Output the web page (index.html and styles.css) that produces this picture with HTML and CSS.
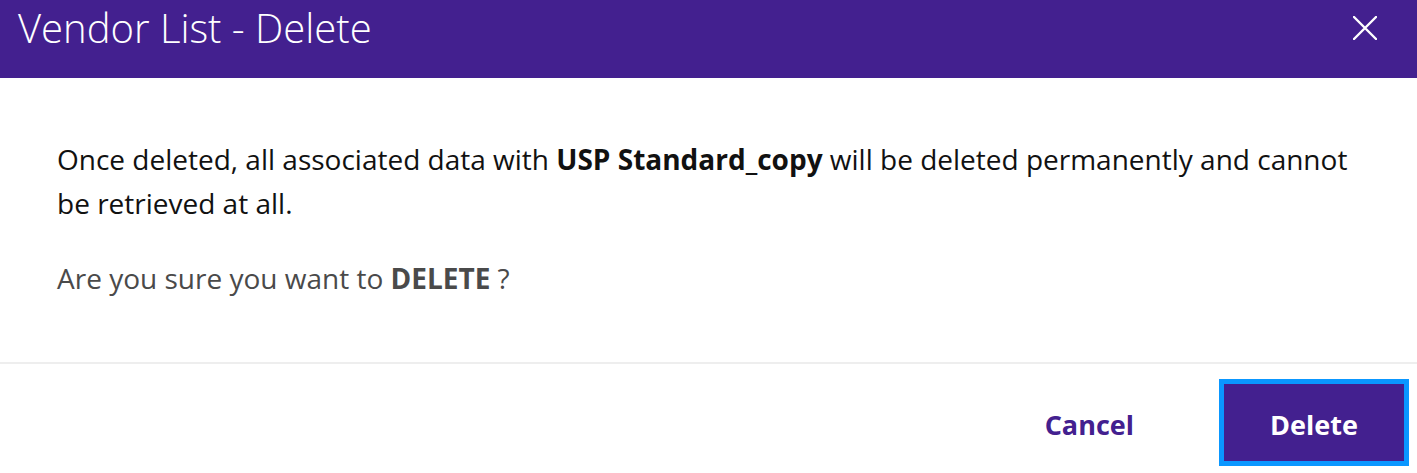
FILE: index.html
```html
<!DOCTYPE html>
<html lang="en">
<head>
<meta charset="utf-8">
<title>Vendor List - Delete</title>
<link rel="stylesheet" href="styles.css">
</head>
<body>
<div class="modal">
  <header class="modal-header">
    <h1 class="modal-title">Vendor List - Delete</h1>
    <button class="close-btn" aria-label="Close">
      <svg width="24" height="24" viewBox="0 0 24 24"><path d="M1 1 L23 23 M23 1 L1 23" stroke="#fff" stroke-width="2.4" stroke-linecap="round" fill="none"/></svg>
    </button>
  </header>
  <section class="modal-body">
    <p class="msg">Once deleted, all associated data with <strong>USP Standard_copy</strong> will be deleted permanently and cannot be retrieved at all.</p>
    <p class="confirm">Are you sure you want to <strong>DELETE</strong> ?</p>
  </section>
  <footer class="modal-footer">
    <button class="btn-cancel">Cancel</button>
    <button class="btn-delete">Delete</button>
  </footer>
</div>
</body>
</html>
```
FILE: styles.css
```css
html, body {
  margin: 0;
  padding: 0;
  background: #fff;
}
body {
  font-family: "Open Sans", "Noto Sans", sans-serif;
}
.modal {
  width: 1417px;
  display: flex;
  flex-direction: column;
}
.modal-header {
  background: #43208f;
  height: 78px;
  box-sizing: border-box;
  display: flex;
  align-items: flex-start;
  justify-content: space-between;
  padding: 8px 40px 0 18px;
}
.modal-title {
  margin: 0;
  color: #fff;
  font-size: 40px;
  line-height: 40px;
  font-weight: 300;
}
.close-btn {
  background: none;
  border: 0;
  padding: 0;
  margin-top: 8px;
  width: 24px;
  height: 24px;
  cursor: pointer;
  display: flex;
}
.modal-body {
  padding: 59px 57px 62px 57px;
  font-size: 28px;
  line-height: 44px;
}
.modal-body p {
  margin: 0;
}
.msg {
  color: #111;
  margin-bottom: 31px !important;
}
.msg strong {
  font-weight: 700;
}
.confirm {
  color: #4a4a4a;
}
.modal-footer {
  border-top: 2px solid #eeeeee;
  display: flex;
  justify-content: flex-end;
  align-items: center;
  gap: 90px;
  padding: 20px 13px 12px 0;
}
.btn-cancel {
  background: none;
  border: 0;
  font-family: inherit;
  font-size: 27px;
  font-weight: 700;
  color: #43208f;
  padding: 4px 0 0 0;
  cursor: pointer;
}
.btn-delete {
  width: 180px;
  height: 77px;
  background: #43208f;
  color: #fff;
  border: 0;
  border-radius: 0;
  padding: 4px 0 0 0;
  font-family: inherit;
  font-size: 27px;
  font-weight: 700;
  outline: 5px solid #0a97ff;
  outline-offset: 0;
  cursor: pointer;
}
```
